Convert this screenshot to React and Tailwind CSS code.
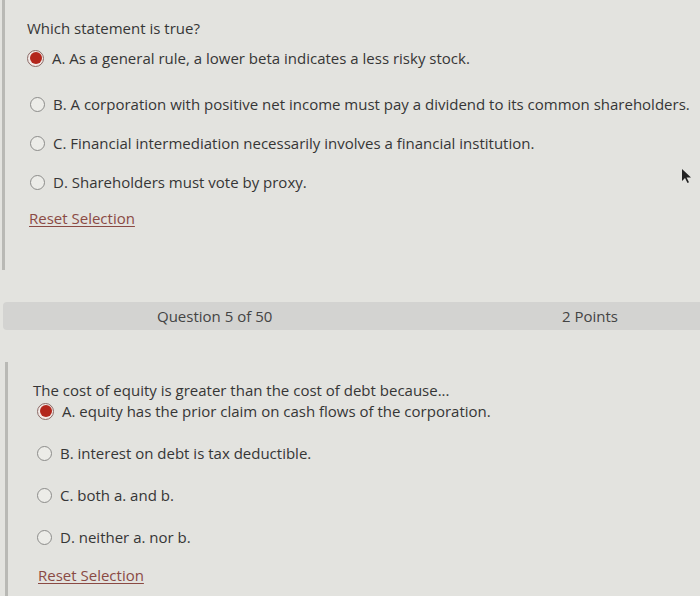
import { useState } from "react";

const QUESTIONS = [
  {
    id: 4,
    text: "Which statement is true?",
    options: [
      "A. As a general rule, a lower beta indicates a less risky stock.",
      "B. A corporation with positive net income must pay a dividend to its common shareholders.",
      "C. Financial intermediation necessarily involves a financial institution.",
      "D. Shareholders must vote by proxy.",
    ],
  },
  {
    id: 5,
    text: "The cost of equity is greater than the cost of debt because...",
    options: [
      "A. equity has the prior claim on cash flows of the corporation.",
      "B. interest on debt is tax deductible.",
      "C. both a. and b.",
      "D. neither a. nor b.",
    ],
  },
];

function Radio({ checked }) {
  if (checked) {
    return (
      <span className="w-[17px] h-[17px] rounded-full border border-[#8a6a66] bg-[#f3e9e6] flex items-center justify-center shrink-0">
        <span className="w-[12px] h-[12px] rounded-full bg-[#b3261c]" />
      </span>
    );
  }
  return (
    <span className="w-[15px] h-[15px] rounded-full border-[1.5px] border-[#8c8c8a] bg-[#ecece8] shrink-0" />
  );
}

function Question({ q, selected, onSelect, onReset, listClass, resetClass }) {
  return (
    <div>
      <div className="text-[15px] leading-[20px]">{q.text}</div>
      <ul className={listClass}>
        {q.options.map((opt, i) => (
          <li
            key={i}
            onClick={() => onSelect(i)}
            className="flex items-center gap-[8px] cursor-pointer h-[20px]"
          >
            <Radio checked={selected === i} />
            <span className="text-[15px] leading-[20px] whitespace-nowrap">{opt}</span>
          </li>
        ))}
      </ul>
      <button
        onClick={onReset}
        className={`${resetClass} text-[15px] leading-[20px] text-[#8a4a44] underline underline-offset-2`}
      >
        Reset Selection
      </button>
    </div>
  );
}

export default function App() {
  const [answers, setAnswers] = useState({ 4: 0, 5: 0 });

  const setAnswer = (id, idx) => setAnswers((prev) => ({ ...prev, [id]: idx }));

  return (
    <div
      className="relative w-[700px] h-[596px] overflow-hidden bg-[#e3e3df] text-[#363636]"
      style={{ fontFamily: '"Open Sans", "Liberation Sans", sans-serif' }}
    >
      {/* question 4 */}
      <div className="ml-[2px] border-l-[3px] border-[#b9b9b5] h-[270px] pl-[22px] pt-[18px]">
        <Question
          q={QUESTIONS[0]}
          selected={answers[4]}
          onSelect={(i) => setAnswer(4, i)}
          onReset={() => setAnswer(4, null)}
          listClass="mt-[10px] flex flex-col gap-[19px] [&>li:first-child]:mb-[7px] [&>li:not(:first-child)]:pl-[3px]"
          resetClass="mt-[16px] ml-[2px]"
        />
      </div>

      {/* header bar */}
      <div className="mt-[32px] ml-[3px] h-[28px] rounded-l-[4px] bg-[#d3d3d1] flex items-center text-[15px] text-[#444]">
        <span className="ml-[154px]">Question 5 of 50</span>
        <span className="ml-auto mr-[82px]">2 Points</span>
      </div>

      {/* question 5 */}
      <div className="mt-[32px] ml-[5px] border-l-[3px] border-[#b9b9b5] h-[240px] pl-[25px] pt-[18px]">
        <Question
          q={QUESTIONS[1]}
          selected={answers[5]}
          onSelect={(i) => setAnswer(5, i)}
          onReset={() => setAnswer(5, null)}
          listClass="mt-[1px] pl-[4px] flex flex-col gap-[22px]"
          resetClass="mt-[18px] ml-[5px]"
        />
      </div>

      {/* mouse pointer */}
      <svg
        className="absolute left-[681px] top-[168px]"
        width="11"
        height="16"
        viewBox="0 0 11 16"
      >
        <path d="M1 1 L1 13 L4 10 L6.5 15 L8 14.3 L5.6 9.4 L10 9.4 Z" fill="#222" />
      </svg>
    </div>
  );
}
